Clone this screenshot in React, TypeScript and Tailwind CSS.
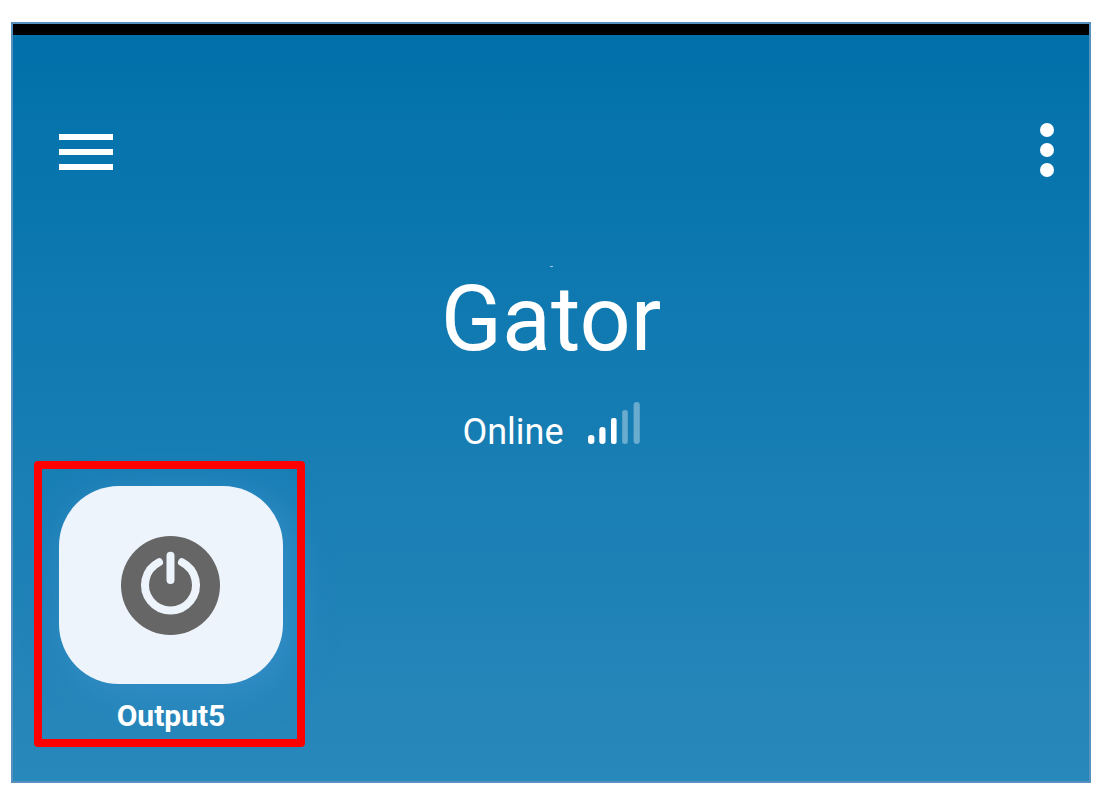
import { useState } from 'react';

function MenuIcon() {
  return (
    <svg width="54" height="54" viewBox="0 0 54 54" fill="currentColor" aria-hidden="true">
      <rect x="0" y="11" width="54" height="6" />
      <rect x="0" y="26" width="54" height="6" />
      <rect x="0" y="41" width="54" height="6" />
    </svg>
  );
}

function MoreIcon() {
  return (
    <svg width="14" height="54" viewBox="0 0 14 54" fill="currentColor" aria-hidden="true">
      <circle cx="7" cy="7" r="7" />
      <circle cx="7" cy="27" r="7" />
      <circle cx="7" cy="47" r="7" />
    </svg>
  );
}

function SignalIcon() {
  return (
    <svg width="52" height="42" viewBox="0 0 52 42" fill="currentColor" role="img" aria-label="Signal strength 3 of 5">
      <rect x="0" y="33" width="6.4" height="9" rx="3" />
      <rect x="11.3" y="25" width="6.2" height="17" rx="3" />
      <rect x="23" y="16" width="5.6" height="26" rx="2" />
      <rect x="34.2" y="8" width="5.6" height="34" rx="2.5" opacity="0.36" />
      <rect x="45.6" y="0" width="6.2" height="42" rx="3" opacity="0.36" />
    </svg>
  );
}

function PowerIcon() {
  return (
    <svg width="100" height="100" viewBox="0 0 100 100" fill="none" aria-hidden="true">
      <circle cx="49.5" cy="50.5" r="49.5" fill="#666666" />
      <g stroke="#eef4fc" strokeWidth="8" strokeLinecap="round">
        <path d="M38 27.2 A25.5 25.5 0 1 0 61 27.2" />
        <path d="M49.5 20.8 V45" />
      </g>
    </svg>
  );
}

export default function App() {
  const [isOn, setIsOn] = useState(false);

  return (
    <div className="flex min-h-screen flex-col bg-white pt-[22px] pr-[9px] pb-4 pl-[11px] font-['Roboto',sans-serif] text-white">
      <main className="flex flex-1 flex-col border-2 border-[#5590bf] bg-linear-to-b/srgb from-[#0070aa] to-[#2988bb]">
        {/* Status bar */}
        <div className="h-[11px] bg-black" />

        {/* Toolbar */}
        <header className="flex items-center justify-between pt-[88px] pr-[35px] pl-[46px]">
          <button type="button" aria-label="Menu">
            <MenuIcon />
          </button>
          <button type="button" aria-label="More options">
            <MoreIcon />
          </button>
        </header>

        {/* Device */}
        <section className="flex flex-col items-center pt-[89px]">
          <div className="h-px w-[3px] bg-white/60" />
          <h1 className="mt-[5px] text-[90px] leading-[96px] font-normal">Gator</h1>
          <div className="mt-[34px] flex items-baseline gap-6">
            <span className="text-[36px] leading-10">Online</span>
            <SignalIcon />
          </div>
        </section>

        {/* Outputs */}
        <section className="mt-[9px] ml-[21px] flex">
          <div className="relative flex flex-col items-center pt-[25px] pr-[22px] pb-[11px] pl-[25px]">
            <button
              type="button"
              id="output-5"
              aria-labelledby="output-5-label"
              aria-pressed={isOn}
              onClick={() => setIsOn(!isOn)}
              className="flex h-[198px] w-[224px] items-center justify-center rounded-[60px] bg-[#eef4fc] shadow-[8px_8px_40px_#368ec8]"
            >
              <PowerIcon />
            </button>
            <label id="output-5-label" htmlFor="output-5" className="mt-3 text-[30px] leading-10 font-bold">
              Output5
            </label>
            {/* Highlight frame, kept above the button glow */}
            <div className="pointer-events-none absolute inset-0 rounded-sm border-8 border-[#ff0000]" />
          </div>
        </section>
      </main>
    </div>
  );
}
